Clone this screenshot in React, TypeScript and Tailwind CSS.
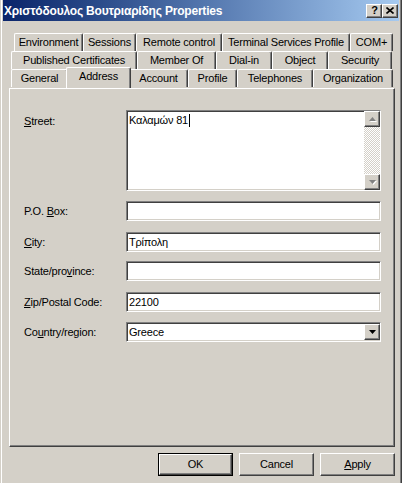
import React from 'react';

const raised =
  'border border-t-white border-l-white border-r-[#404040] border-b-[#404040] shadow-[inset_-1px_-1px_0_#808080]';
const sunken =
  'border border-t-[#808080] border-l-[#808080] border-r-white border-b-white shadow-[inset_1px_1px_0_#404040,inset_-1px_-1px_0_#d4d0c8]';

type TabDef = { label: string; w: string; selected?: boolean };

const row1: TabDef[] = [
  { label: 'Environment', w: 'w-[69px]' },
  { label: 'Sessions', w: 'w-[53px]' },
  { label: 'Remote control', w: 'w-[86px]' },
  { label: 'Terminal Services Profile', w: 'w-[128px]' },
  { label: 'COM+', w: 'w-[43px]' },
];
const row2: TabDef[] = [
  { label: 'Published Certificates', w: 'w-[126px]' },
  { label: 'Member Of', w: 'w-[79px]' },
  { label: 'Dial-in', w: 'w-[56px]' },
  { label: 'Object', w: 'w-[56px]' },
  { label: 'Security', w: 'w-[64px]' },
];
const row3: TabDef[] = [
  { label: 'General', w: 'w-[57px]' },
  { label: 'Address', w: 'w-[65px]', selected: true },
  { label: 'Account', w: 'w-[59px]' },
  { label: 'Profile', w: 'w-[49px]' },
  { label: 'Telephones', w: 'w-[76px]' },
  { label: 'Organization', w: 'w-[80px]' },
];

function Tab({ t }: { t: TabDef }) {
  if (t.selected) {
    return (
      <div
        className={`${t.w} relative z-10 -mx-[2px] -mt-[2px] h-[21px] shrink-0 rounded-t-[2px] bg-[#d4d0c8] border-t border-l border-r border-t-white border-l-white border-r-[#404040] shadow-[inset_-1px_0_0_#808080] text-center leading-[17px] whitespace-nowrap`}
      >
        {t.label}
      </div>
    );
  }
  return (
    <div
      className={`${t.w} h-[18px] shrink-0 rounded-t-[2px] border-t border-l border-r border-t-white border-l-white border-r-[#404040] shadow-[inset_-1px_0_0_#808080] text-center leading-[17px] whitespace-nowrap`}
    >
      {t.label}
    </div>
  );
}

function Arrow({ up, color }: { up?: boolean; color: string }) {
  return (
    <svg width="7" height="4" viewBox="0 0 7 4" className="block">
      {up ? (
        <path d="M3.5 0 L7 4 L0 4 Z" fill={color} />
      ) : (
        <path d="M0 0 L7 0 L3.5 4 Z" fill={color} />
      )}
    </svg>
  );
}

function ScrollBtn({ up }: { up?: boolean }) {
  return (
    <div className={`${raised} w-[16px] h-[16px] bg-[#d4d0c8] flex items-center justify-center`}>
      <div className="relative">
        <div className="absolute left-[1px] top-[1px]">
          <Arrow up={up} color="#ffffff" />
        </div>
        <div className="relative">
          <Arrow up={up} color="#808080" />
        </div>
      </div>
    </div>
  );
}

function Label({ children }: { children: React.ReactNode }) {
  return <div className="w-[102px] shrink-0 whitespace-nowrap">{children}</div>;
}

function Field({ label, value, mt }: { label: React.ReactNode; value?: string; mt: string }) {
  return (
    <div className={`flex items-center ${mt}`}>
      <Label>{label}</Label>
      <div className={`${sunken} w-[255px] h-[20px] bg-white pl-[2px] leading-[18px]`}>{value}</div>
    </div>
  );
}

function Button({ children, def }: { children: React.ReactNode; def?: boolean }) {
  if (def) {
    return (
      <div className="w-[75px] h-[23px] border border-black">
        <div className={`${raised} w-full h-full flex items-center justify-center`}>{children}</div>
      </div>
    );
  }
  return (
    <div className={`${raised} w-[75px] h-[23px] flex items-center justify-center`}>{children}</div>
  );
}

export default function App() {
  return (
    <div className="w-[402px] h-[483px] overflow-hidden bg-[#d4d0c8] border-l border-l-[#d4d0c8] shadow-[inset_1px_0_0_#fff,inset_-1px_0_0_#404040,inset_-2px_0_0_#808080] flex flex-col text-[11px] tracking-[-0.2px] text-black [font-family:'Liberation_Sans','Noto_Sans',sans-serif]">
      {/* title bar */}
      <div className="ml-[2px] w-[396px] h-[21px] shrink-0 bg-linear-to-r from-[#0a246a] to-[#a6caf0] flex items-center justify-between pl-[1px] pr-[1px]">
        <span className="text-white font-bold text-[12px] tracking-[-0.2px] pt-[1px] whitespace-nowrap">
          Χριστόδουλος Βουτριαρίδης Properties
        </span>
        <div className="flex">
          <div className={`${raised} w-[16px] h-[14px] bg-[#d4d0c8] flex items-center justify-center font-bold text-[11px] leading-none pl-[1px]`}>
            ?
          </div>
          <div className={`${raised} w-[16px] h-[14px] bg-[#d4d0c8] flex items-center justify-center`}>
            <svg width="8" height="7" viewBox="0 0 8 7" className="block">
              <path d="M0.5 0.5 L7.5 6.5 M7.5 0.5 L0.5 6.5" stroke="#000" strokeWidth="1.6" />
            </svg>
          </div>
        </div>
      </div>

      {/* body */}
      <div className="ml-[8px] w-[386px] mt-[12px]">
        <div className="flex ml-[5px]">
          {row1.map((t) => (
            <Tab key={t.label} t={t} />
          ))}
        </div>
        <div className="flex ml-[2px]">
          {row2.map((t) => (
            <Tab key={t.label} t={t} />
          ))}
        </div>
        <div className="flex ml-[2px]">
          {row3.map((t) => (
            <Tab key={t.label} t={t} />
          ))}
        </div>

        {/* panel */}
        <div className="h-[359px] border border-t-white border-l-white border-r-[#404040] border-b-[#404040] shadow-[inset_-1px_-1px_0_#808080] pl-[14px] pt-[21px]">
          <div className="flex items-start">
            <div className="w-[102px] shrink-0 pt-[3px]">
              <span className="underline underline-offset-1">S</span>treet:
            </div>
            <div className={`${sunken} w-[255px] h-[81px] bg-white flex`}>
              <div className="flex-1 pl-[2px] pt-[3px] leading-[13px] whitespace-nowrap">
                Καλαμών 81<span className="inline-block w-[1px] h-[13px] bg-black align-top ml-[1px]" />
              </div>
              <div className="w-[16px] flex flex-col">
                <ScrollBtn up />
                <div className="flex-1 bg-[repeating-conic-gradient(#ffffff_0_25%,#d4d0c8_0_50%)] bg-size-[2px_2px]" />
                <ScrollBtn />
              </div>
            </div>
          </div>

          <Field
            mt="mt-[10px]"
            label={
              <>
                P.O. <span className="underline underline-offset-1">B</span>ox:
              </>
            }
          />
          <Field
            mt="mt-[11px]"
            value="Τρίπολη"
            label={
              <>
                <span className="underline underline-offset-1">C</span>ity:
              </>
            }
          />
          <Field
            mt="mt-[9px]"
            label={
              <>
                State/pro<span className="underline underline-offset-1">v</span>ince:
              </>
            }
          />
          <Field
            mt="mt-[11px]"
            value="22100"
            label={
              <>
                <span className="underline underline-offset-1">Z</span>ip/Postal Code:
              </>
            }
          />
          <div className="flex items-center mt-[10px]">
            <Label>
              Co<span className="underline underline-offset-1">u</span>ntry/region:
            </Label>
            <div className={`${sunken} w-[255px] h-[20px] bg-white flex items-center`}>
              <div className="flex-1 pl-[2px] leading-[16px]">Greece</div>
              <div className={`${raised} w-[16px] h-[16px] bg-[#d4d0c8] flex items-center justify-center`}>
                <Arrow color="#000000" />
              </div>
            </div>
          </div>
        </div>

        {/* buttons */}
        <div className="flex justify-end gap-[6px] mt-[6px]">
          <Button def>OK</Button>
          <Button>Cancel</Button>
          <Button>
            <span>
              <span className="underline underline-offset-1">A</span>pply
            </span>
          </Button>
        </div>
      </div>
    </div>
  );
}
